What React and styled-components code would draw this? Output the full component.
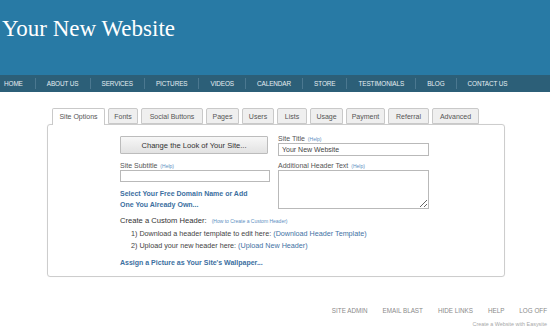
import React from "react";
import styled, { createGlobalStyle } from "styled-components";

const Global = createGlobalStyle`
  html, body { margin: 0; padding: 0; background: #fff; }
  body { font-family: "Liberation Sans", Arial, sans-serif; color: #444; }
  * { box-sizing: border-box; }
`;

const Page = styled.div`
  width: 550px;
  height: 335px;
  overflow: hidden;
  display: flex;
  flex-direction: column;
`;

const Header = styled.header`
  height: 75px;
  background: #287aa5;
  padding: 17px 0 0 2px;
`;

const Title = styled.h1`
  margin: 0;
  font-family: "Liberation Serif", "Times New Roman", serif;
  font-weight: normal;
  font-size: 23px;
  line-height: 23px;
  color: #fff;
`;

const Nav = styled.nav`
  height: 17px;
  background: #2c5f78;
  display: flex;
  align-items: center;
`;

const NavItem = styled.span`
  font-size: 6.4px;
  line-height: 17px;
  color: #e6eef2;
  padding: 0 11px;
  letter-spacing: -0.1px;
  & + & {
    border-left: 1px solid #4b7890;
    height: 11px;
    line-height: 11px;
  }
  &:first-child { padding-left: 4px; padding-right: 12px; }
`;

const Main = styled.main`
  margin: 16px 0 0 47px;
  width: 458px;
`;

const Tabs = styled.div`
  display: flex;
  gap: 3px;
  padding-left: 5px;
  height: 16px;
  position: relative;
  z-index: 1;
`;

const Tab = styled.div`
  width: ${(p) => p.$w}px;
  height: ${(p) => (p.$active ? 17 : 16)}px;
  border: 1px solid #c9c9c9;
  border-bottom: ${(p) => (p.$active ? "none" : "1px solid #c9c9c9")};
  border-radius: 2px 2px 0 0;
  background: ${(p) => (p.$active ? "#fff" : "#efefef")};
  font-size: 7px;
  line-height: 15px;
  text-align: center;
  color: #555;
  white-space: nowrap;
`;

const Panel = styled.section`
  border: 1px solid #cdcdcd;
  border-radius: 3px;
  padding: 0 0 8px 72px;
  box-shadow: 0 0 1px rgba(0, 0, 0, 0.08);
`;

const Columns = styled.div`
  display: flex;
  gap: 8px;
`;

const Column = styled.div`
  display: flex;
  flex-direction: column;
  width: ${(p) => p.$w}px;
`;

const LookButton = styled.button`
  margin-top: 11px;
  height: 18px;
  width: 148px;
  border: 1px solid #bcbcbc;
  border-radius: 1px;
  background: linear-gradient(#f7f7f7, #e2e2e2);
  font-family: "Liberation Sans", Arial, sans-serif;
  font-size: 7.6px;
  color: #333;
  padding: 0;
`;

const Label = styled.div`
  margin-top: ${(p) => p.$mt}px;
  font-size: 7px;
  line-height: 8px;
  color: #555;
  white-space: nowrap;
`;

const Help = styled.span`
  font-size: 5px;
  color: #5d8fc2;
  margin-left: 3px;
`;

const TextInput = styled.div`
  height: ${(p) => p.$h}px;
  border: 1px solid #b9b9b9;
  background: #fff;
  font-size: 7px;
  line-height: ${(p) => p.$h - 2}px;
  padding-left: 3px;
  color: #444;
`;

const TextArea = styled.textarea`
  height: 39px;
  width: 100%;
  border: 1px solid #b9b9b9;
  border-radius: 0;
  margin: 0;
  padding: 0;
  resize: both;
  display: block;
`;

const BoldLink = styled.a`
  display: block;
  margin-top: ${(p) => p.$mt}px;
  font-size: 7px;
  line-height: 11px;
  font-weight: bold;
  color: #3c6f9f;
  text-decoration: none;
`;

const Line = styled.div`
  margin-top: ${(p) => p.$mt || 0}px;
  padding-left: ${(p) => (p.$indent ? 11 : 0)}px;
  font-size: ${(p) => (p.$lead ? 7.6 : 7.2)}px;
  line-height: 12px;
  color: ${(p) => (p.$lead ? "#333" : "#444")};
  white-space: nowrap;
`;

const Link = styled.span`
  color: #3f72a4;
`;

const Footer = styled.footer`
  margin-top: 29px;
  padding-right: 3px;
  display: flex;
  flex-direction: column;
  align-items: flex-end;
`;

const FooterLinks = styled.div`
  display: flex;
  gap: 15px;
`;

const FooterLink = styled.span`
  font-size: 6.3px;
  line-height: 10px;
  color: #8a8a8a;
`;

const Credit = styled.div`
  margin-top: 4px;
  font-size: 5.4px;
  line-height: 8px;
  color: #a8a8a8;
`;

const navItems = ["HOME", "ABOUT US", "SERVICES", "PICTURES", "VIDEOS", "CALENDAR", "STORE", "TESTIMONIALS", "BLOG", "CONTACT US"];
const tabs = [
  ["Site Options", 53],
  ["Fonts", 30],
  ["Social Buttons", 62],
  ["Pages", 33],
  ["Users", 32],
  ["Lists", 30],
  ["Usage", 33],
  ["Payment", 39],
  ["Referral", 41],
  ["Advanced", 47],
];

export default function App() {
  return (
    <Page>
      <Global />
      <Header>
        <Title>Your New Website</Title>
      </Header>
      <Nav>
        {navItems.map((n) => (
          <NavItem key={n}>{n}</NavItem>
        ))}
      </Nav>
      <Main>
        <Tabs>
          {tabs.map(([t, w], i) => (
            <Tab key={t} $w={w} $active={i === 0}>
              {t}
            </Tab>
          ))}
        </Tabs>
        <Panel>
          <Columns>
            <Column $w={150}>
              <LookButton>Change the Look of Your Site...</LookButton>
              <Label $mt={8}>
                Site Subtitle<Help>(Help)</Help>
              </Label>
              <TextInput $h={12} />
              <BoldLink $mt={6}>
                Select Your Free Domain Name or Add
                <br />
                One You Already Own...
              </BoldLink>
            </Column>
            <Column $w={151}>
              <Label $mt={10}>
                Site Title<Help>(Help)</Help>
              </Label>
              <TextInput $h={13}>Your New Website</TextInput>
              <Label $mt={6}>
                Additional Header Text<Help>(Help)</Help>
              </Label>
              <TextArea />
            </Column>
          </Columns>
          <Line $mt={5} $lead>
            Create a Custom Header: <Help>(How to Create a Custom Header)</Help>
          </Line>
          <Line $mt={1} $indent>
            1) Download a header template to edit here: <Link>(Download Header Template)</Link>
          </Line>
          <Line $indent>
            2) Upload your new header here: <Link>(Upload New Header)</Link>
          </Line>
          <BoldLink $mt={5}>Assign a Picture as Your Site's Wallpaper...</BoldLink>
        </Panel>
      </Main>
      <Footer>
        <FooterLinks>
          {["SITE ADMIN", "EMAIL BLAST", "HIDE LINKS", "HELP", "LOG OFF"].map((f) => (
            <FooterLink key={f}>{f}</FooterLink>
          ))}
        </FooterLinks>
        <Credit>Create a Website with Easysite</Credit>
      </Footer>
    </Page>
  );
}
